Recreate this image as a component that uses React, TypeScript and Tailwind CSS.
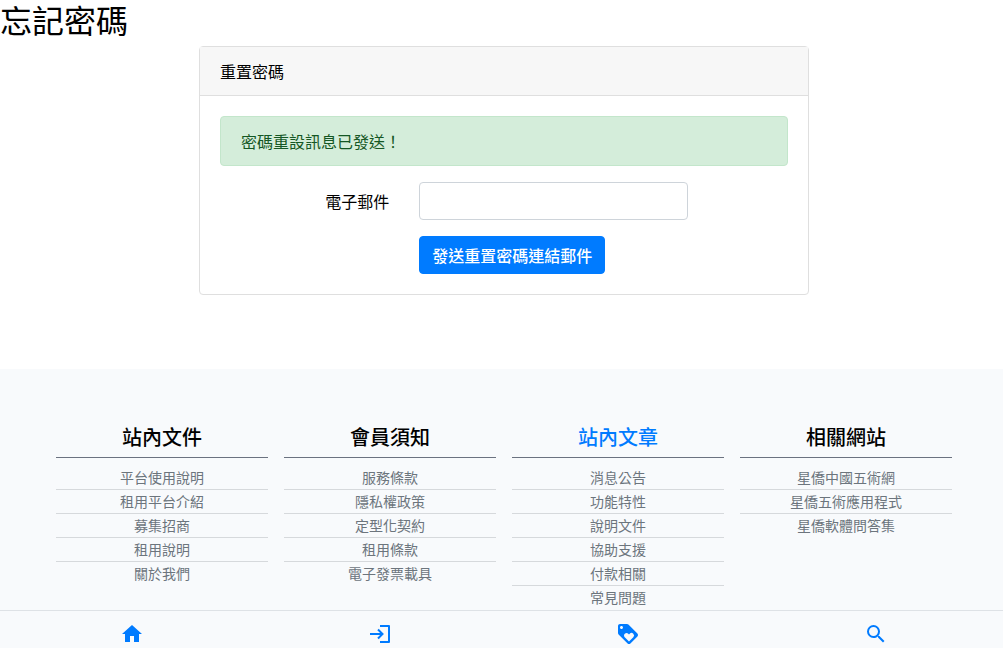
import { MdHome, MdLoyalty, MdSearch } from 'react-icons/md'

const footerColumns = [
  {
    title: '站內文件',
    links: ['平台使用說明', '租用平台介紹', '募集招商', '租用說明', '關於我們'],
  },
  {
    title: '會員須知',
    links: ['服務條款', '隱私權政策', '定型化契約', '租用條款', '電子發票載具'],
  },
  {
    title: '站內文章',
    href: '#articles',
    links: ['消息公告', '功能特性', '說明文件', '協助支援', '付款相關', '常見問題'],
  },
  {
    title: '相關網站',
    links: ['星僑中國五術網', '星僑五術應用程式', '星僑軟體問答集'],
  },
]

function LoginIcon() {
  return (
    <svg
      width="24"
      height="24"
      viewBox="0 0 24 24"
      fill="none"
      stroke="currentColor"
      strokeWidth="2"
      aria-hidden="true"
    >
      <path d="M12 4h9v16h-9" strokeLinejoin="round" />
      <path d="M2 12h12M10 7.5l4.5 4.5-4.5 4.5" />
    </svg>
  )
}

const navItems = [
  { label: '首頁', icon: <MdHome size={24} /> },
  { label: '登入', icon: <LoginIcon /> },
  { label: '收藏', icon: <MdLoyalty size={24} /> },
  { label: '搜尋', icon: <MdSearch size={24} /> },
]

function ResetCard() {
  return (
    <section className="mx-auto w-full max-w-[610px] rounded border border-[#dfdfdf] bg-white">
      <div className="border-b border-[#dfdfdf] bg-[#f7f7f7] px-5 py-3">重置密碼</div>
      <div className="p-5">
        <div
          role="alert"
          className="mb-4 rounded border border-[#c3e6cb] bg-[#d4edda] px-5 py-3 text-[#155724]"
        >
          密碼重設訊息已發送！
        </div>
        <form className="-mx-[15px] grid grid-cols-12 gap-y-4" onSubmit={(e) => e.preventDefault()}>
          <label htmlFor="email" className="col-span-4 px-[15px] py-[7px] text-right">
            電子郵件
          </label>
          <div className="col-span-6 px-[15px]">
            <input
              id="email"
              type="email"
              className="block h-[38px] w-full rounded border border-[#ced4da] bg-white px-3"
            />
          </div>
          <div className="col-span-8 col-start-5 px-[15px]">
            <button
              type="submit"
              className="block h-[38px] rounded border border-[#007bff] bg-[#007bff] px-3 font-medium text-white"
            >
              發送重置密碼連結郵件
            </button>
          </div>
        </form>
      </div>
    </section>
  )
}

export default function App() {
  return (
    <div className="flex min-h-screen flex-col bg-white font-['Noto_Sans_CJK_TC',sans-serif] text-base text-black">
      <h1 className="mb-2 text-[32px] leading-[38px] font-normal">忘記密碼</h1>
      <main className="mb-[74px] pl-[5px]">
        <ResetCard />
      </main>

      <footer className="grow bg-[#f8fafc] pt-14 pr-[51px] pl-14">
        <div className="grid grid-cols-4 gap-4 text-center">
          {footerColumns.map((col) => (
            <div key={col.title}>
              <h5 className="mb-2 border-b border-[#6b7280] pb-2 text-xl leading-6 font-medium">
                {col.href ? (
                  <a href={col.href} className="text-[#007bff]">
                    {col.title}
                  </a>
                ) : (
                  col.title
                )}
              </h5>
              <ul className="divide-y divide-[#d6d9dc] text-sm text-[#6c757d]">
                {col.links.map((link) => (
                  <li key={link}>
                    <a href="#" className="block leading-[23px]">
                      {link}
                    </a>
                  </li>
                ))}
              </ul>
            </div>
          ))}
        </div>
      </footer>

      <nav className="sticky bottom-0 grid h-[38px] grid-cols-4 border-t border-[#dee2e6] bg-[#f8fafc] pr-[3px] pl-2 text-[#007bff]">
        {navItems.map((item) => (
          <a
            key={item.label}
            href="#"
            aria-label={item.label}
            className="flex items-start justify-center pt-[11px]"
          >
            {item.icon}
          </a>
        ))}
      </nav>
    </div>
  )
}
